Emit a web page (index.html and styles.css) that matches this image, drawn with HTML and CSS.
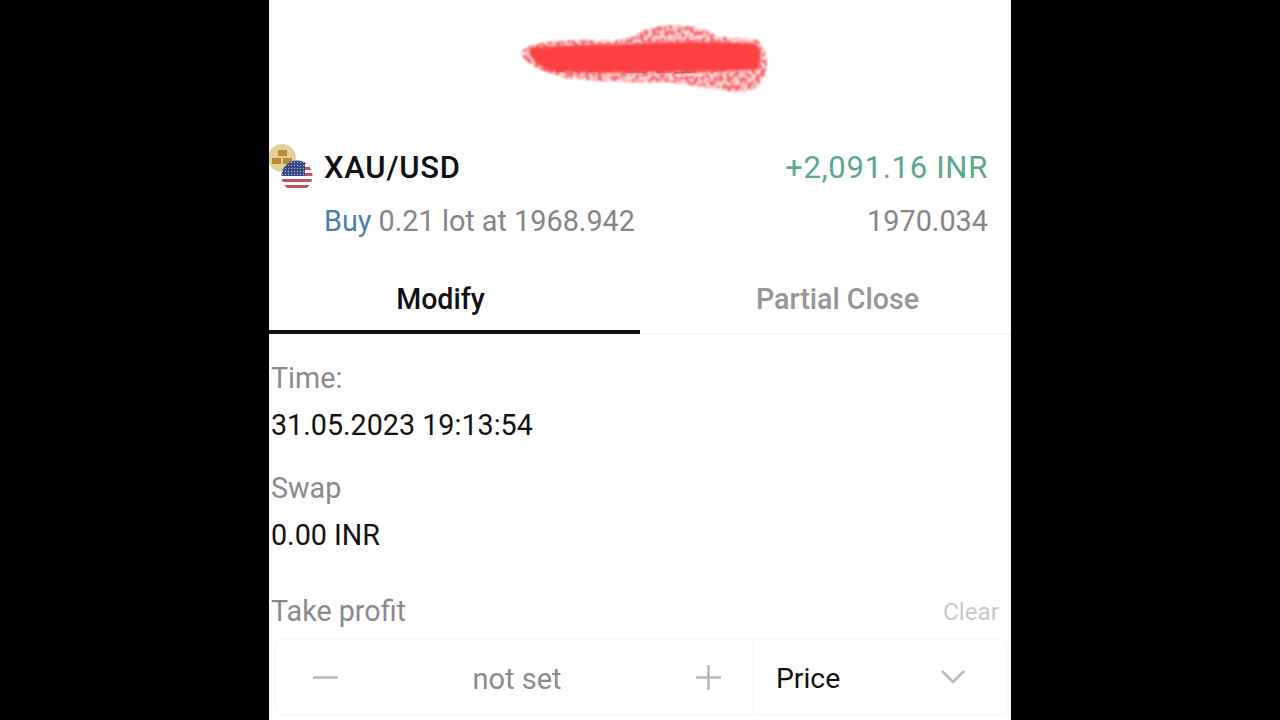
FILE: index.html
```html
<!DOCTYPE html>
<html lang="en">
<head>
    <meta charset="UTF-8">
    <meta name="viewport" content="width=device-width, initial-scale=1.0">
    <title>XAU/USD position</title>
    <link rel="stylesheet" href="styles.css">
</head>
<body>
    <div class="phone">

        <!-- Scribbled-out account name -->
        <div class="scribble-row">
            <svg class="scribble" width="254" height="74" viewBox="0 0 254 74">
                <defs>
                    <filter id="rough" x="-5%" y="-10%" width="110%" height="120%">
                        <feTurbulence type="fractalNoise" baseFrequency="0.09" numOctaves="2" seed="4" result="noise"/>
                        <feDisplacementMap in="SourceGraphic" in2="noise" scale="7"/>
                        <feGaussianBlur stdDeviation="0.8"/>
                    </filter>
                    <filter id="speckle" x="-5%" y="-10%" width="110%" height="120%">
                        <feTurbulence type="fractalNoise" baseFrequency="0.24" numOctaves="1" seed="9" result="noise"/>
                        <feColorMatrix in="noise" type="matrix" values="0 0 0 0 0  0 0 0 0 0  0 0 0 0 0  7 0 0 0 -3.1" result="mask"/>
                        <feComposite in="SourceGraphic" in2="mask" operator="in"/>
                        <feGaussianBlur stdDeviation="0.8"/>
                    </filter>
                    <filter id="soft"><feGaussianBlur stdDeviation="1.6"/></filter>
                </defs>
                <path filter="url(#rough)" fill="#fbd5d7" d="M2 30 C4 20 40 16 80 18 C96 18 112 16 124 8 C140 1 175 0 192 10 C200 16 225 15 238 17 C246 24 248 34 248 44 C246 56 236 70 221 70 C200 66 170 62 151 59 C120 60 80 58 48 55 C28 50 6 42 2 30 Z"/>
                <path filter="url(#speckle)" fill="#f9666b" d="M2 30 C4 20 40 16 80 18 C96 18 112 16 124 8 C140 1 175 0 192 10 C200 16 225 15 238 17 C246 24 248 34 248 44 C246 56 236 70 221 70 C200 66 170 62 151 59 C120 60 80 58 48 55 C28 50 6 42 2 30 Z"/>
                <g stroke="#5b3a45" stroke-width="1.5" opacity="0.55" fill="none">
                    <path d="M37 48 L44 48"/>
                    <path d="M54 47 L60 49"/>
                    <path d="M68 48 L80 48"/>
                    <path d="M108 49 L128 49"/>
                    <path d="M138 49 L150 49"/>
                    <path d="M156 50 L176 49"/>
                </g>
                <path filter="url(#soft)" fill="#fc3f43" d="M10 25 C50 21 100 22 130 20 C170 18 210 19 238 21 C243 30 242 40 238 47 C200 48 165 49 130 49 C95 50 55 50 30 48 C18 42 10 34 10 25 Z"/>
            </svg>
        </div>

        <!-- Position summary -->
        <div class="summary">
            <div class="symbol-icons">
                <svg width="46" height="50" viewBox="0 0 46 50">
                    <defs>
                        <clipPath id="flagClip"><circle cx="28" cy="33" r="15.5"/></clipPath>
                        <pattern id="stars" width="3" height="3" patternUnits="userSpaceOnUse">
                            <rect width="3" height="3" fill="#34457f"/>
                            <circle cx="1.5" cy="1.5" r="0.7" fill="#aab4d6"/>
                        </pattern>
                    </defs>
                    <circle cx="13" cy="15" r="14" fill="#e3cf9a"/>
                    <rect x="9" y="7" width="9" height="6" fill="#b98a34"/>
                    <rect x="3" y="15" width="9" height="6" fill="#b98a34"/>
                    <rect x="14" y="15" width="9" height="6" fill="#b98a34"/>
                    <g clip-path="url(#flagClip)">
                        <rect x="12" y="17" width="32" height="32" fill="#fff"/>
                        <rect x="12" y="18" width="32" height="3" fill="#c9505f"/>
                        <rect x="12" y="24" width="32" height="3" fill="#c9505f"/>
                        <rect x="12" y="30" width="32" height="3" fill="#c9505f"/>
                        <rect x="12" y="36" width="32" height="3" fill="#c9505f"/>
                        <rect x="12" y="42" width="32" height="3" fill="#c9505f"/>
                        <rect x="12" y="17" width="24" height="16" fill="url(#stars)"/>
                    </g>
                </svg>
            </div>
            <div class="summary-text">
                <div class="summary-line">
                    <span class="symbol">XAU/USD</span>
                    <span class="profit">+2,091.16 INR</span>
                </div>
                <div class="summary-line summary-sub">
                    <span><span class="buy">Buy</span> 0.21 lot at 1968.942</span>
                    <span>1970.034</span>
                </div>
            </div>
        </div>

        <!-- Tabs -->
        <div class="tabs">
            <div class="tab active">Modify</div>
            <div class="tab">Partial Close</div>
        </div>

        <!-- Details -->
        <div class="details">
            <div class="label">Time:</div>
            <div class="value">31.05.2023 19:13:54</div>
            <div class="label label-gap">Swap</div>
            <div class="value">0.00 INR</div>

            <div class="tp-header">
                <span class="label">Take profit</span>
                <span class="clear">Clear</span>
            </div>
        </div>

        <div class="tp-box">
            <div class="stepper">
                <svg width="25" height="25" viewBox="0 0 25 25">
                    <path d="M0 12.5 H25" stroke="#b5b5b5" stroke-width="2.5"/>
                </svg>
                <span class="not-set">not set</span>
                <svg width="25" height="25" viewBox="0 0 25 25">
                    <path d="M0 12.5 H25 M12.5 0 V25" stroke="#b5b5b5" stroke-width="2.5"/>
                </svg>
            </div>
            <div class="price-select">
                <span>Price</span>
                <svg width="24" height="16" viewBox="0 0 24 16">
                    <path d="M1 2 L12 13 L23 2" fill="none" stroke="#b8b8b8" stroke-width="2.6"/>
                </svg>
            </div>
        </div>

    </div>
</body>
</html>
```

FILE: styles.css
```css
html, body {
    margin: 0;
    height: 720px;
    overflow: hidden;
    background-color: #000000;
}

body {
    display: flex;
    justify-content: center;
    font-family: Roboto, "Liberation Sans", sans-serif;
}

/* Main Container */
.phone {
    width: 742px;
    height: 720px;
    background-color: #ffffff;
    overflow: hidden;
}

/* Scribble */
.scribble-row {
    height: 143px;
    padding-top: 23px;
    padding-left: 250px;
    box-sizing: border-box;
}

.scribble {
    display: block;
}

/* Summary */
.summary {
    display: flex;
    height: 106px;
}

.symbol-icons {
    width: 55px;
    flex-shrink: 0;
}

.symbol-icons svg {
    display: block;
}

.summary-text {
    flex: 1;
    padding-right: 23px;
}

.summary-line {
    display: flex;
    justify-content: space-between;
    align-items: center;
    height: 48px;
}

.summary-sub {
    height: 59px;
    font-size: 28.8px;
    color: #858585;
}

.symbol {
    font-size: 31px;
    font-weight: 500;
    letter-spacing: 0.75px;
    color: #111111;
}

.profit {
    font-size: 31px;
    letter-spacing: 0.7px;
    color: #5aa88e;
}

.buy {
    color: #4d7fab;
}

/* Tabs */
.tabs {
    display: flex;
    height: 86px;
    border-bottom: 2px solid #f4f4f4;
    box-sizing: border-box;
}

.tab {
    flex: 1;
    display: flex;
    align-items: center;
    justify-content: center;
    font-size: 28.6px;
    font-weight: 500;
    color: #969696;
    padding-top: 15px;
    box-sizing: border-box;
}

.tab.active {
    color: #111111;
    border-bottom: 4px solid #111111;
    margin-bottom: -1px;
    flex: 0 0 371px;
    padding-top: 18px;
    padding-right: 28px;
}

.tab:last-child {
    padding-left: 24px;
}

/* Details */
.details {
    padding: 25px 12px 0 2px;
}

.label {
    font-size: 28.7px;
    line-height: 36px;
    color: #8a8a8a;
}

.label-gap {
    margin-top: 27px;
}

.value {
    font-size: 28.7px;
    line-height: 36px;
    margin-top: 11px;
    color: #111111;
}

.tp-header {
    display: flex;
    justify-content: space-between;
    align-items: center;
    margin-top: 40px;
}

.clear {
    font-size: 24.3px;
    color: #c8c8c8;
}

/* Take profit box */
.tp-box {
    display: flex;
    height: 78px;
    margin: 9px 3px 0 5px;
    border: 2px solid #fafafa;
    border-radius: 8px;
    box-sizing: border-box;
}

.stepper {
    flex: 0 0 478px;
    display: flex;
    justify-content: space-between;
    align-items: center;
    padding: 0 31px 0 37px;
    box-sizing: border-box;
    border-right: 2px solid #fafafa;
}

.not-set {
    font-size: 29px;
    color: #8c8c8c;
    padding-top: 3px;
}

.price-select {
    flex: 1;
    display: flex;
    justify-content: space-between;
    align-items: center;
    padding: 0 41px 0 22px;
    font-size: 28.3px;
    color: #111111;
}

.price-select span {
    padding-top: 2px;
}
```
